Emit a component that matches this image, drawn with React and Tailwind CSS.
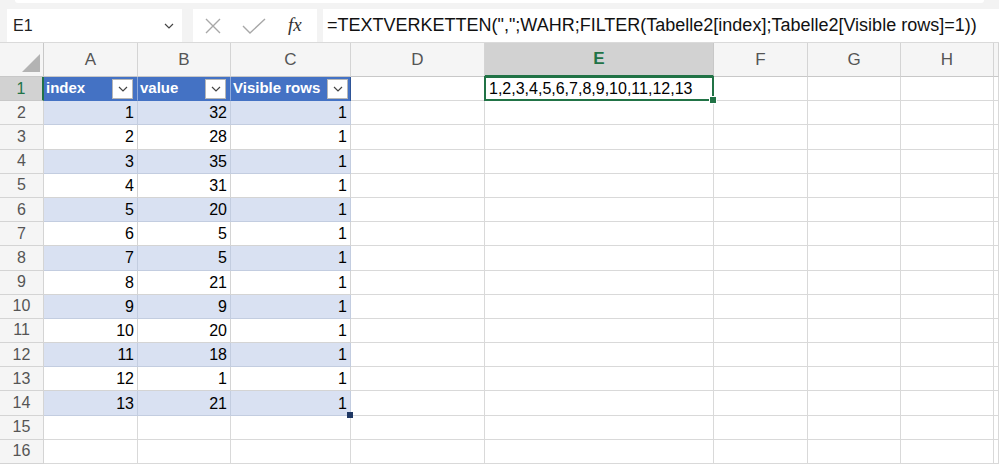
import React from 'react'

const COLS = ['A', 'B', 'C', 'D', 'E', 'F', 'G', 'H', '']
const VALUES = [32, 28, 35, 31, 20, 5, 5, 21, 9, 20, 18, 1, 21]
const FORMULA = '=TEXTVERKETTEN(",";WAHR;FILTER(Tabelle2[index];Tabelle2[Visible rows]=1))'

const font = { fontFamily: '"Liberation Sans", Arial, sans-serif' }

function Chevron({ className = '' }) {
  return (
    <svg width="10" height="6" viewBox="0 0 10 6" className={className}>
      <path d="M1 1l4 4 4-4" fill="none" stroke="#444" strokeWidth="1.2" />
    </svg>
  )
}

function FilterButton() {
  return (
    <div className="w-[21px] h-[20px] bg-white border border-[#b7b7b7] flex items-center justify-center shrink-0">
      <Chevron />
    </div>
  )
}

function FormulaBar() {
  return (
    <div className="h-[43px] bg-[#f3f3f3] border-b border-[#dadada] relative">
      <div className="h-[3px] mx-[15px] bg-white rounded-b-md" />
      <div className="flex items-stretch h-[33px] mt-[6px]">
        <div className="ml-[7px] w-[175px] bg-white flex items-center justify-between pl-[6px] pr-[8px]">
          <span className="text-[16px] text-[#222]">E1</span>
          <Chevron />
        </div>
        <div className="ml-[11px] w-[124px] bg-white flex items-center">
          <svg width="16" height="16" viewBox="0 0 16 16" className="ml-[12px]">
            <path d="M1 1l14 14M15 1L1 15" stroke="#a8a8a8" strokeWidth="1.4" fill="none" />
          </svg>
          <svg width="24" height="16" viewBox="0 0 24 16" className="ml-[21px]">
            <path d="M1 8l7 7L23 1" stroke="#a8a8a8" strokeWidth="1.4" fill="none" />
          </svg>
          <span
            className="ml-[22px] text-[19px] italic text-[#333]"
            style={{ fontFamily: '"Liberation Serif", "Times New Roman", serif' }}
          >
            fx
          </span>
        </div>
        <div className="ml-[6px] flex-1 bg-white flex items-center pl-[4px] overflow-hidden whitespace-nowrap">
          <span className="text-[18px] text-[#111]">{FORMULA}</span>
        </div>
      </div>
    </div>
  )
}

function ColumnHeaders() {
  return (
    <>
      <div className="bg-[#f5f5f5] border-r border-b border-[#c8c8c8] flex items-end justify-end pr-[3px] pb-[4px]">
        <svg width="18" height="18" viewBox="0 0 18 18">
          <path d="M18 0L18 18L0 18Z" fill="#b3b3b3" />
        </svg>
      </div>
      {COLS.map((c, i) =>
        c === 'E' ? (
          <div
            key={i}
            className="bg-[#d2d2d2] border-r border-[#c8c8c8] border-b-2 border-b-[#217346] flex items-center justify-center text-[17px] text-[#217346] font-bold"
          >
            {c}
          </div>
        ) : (
          <div
            key={i}
            className="bg-[#f5f5f5] border-r border-b border-[#d4d4d4] border-b-[#c8c8c8] flex items-center justify-center text-[17px] text-[#555]"
          >
            {c}
          </div>
        )
      )}
    </>
  )
}

function RowHeader({ n }) {
  if (n === 1) {
    return (
      <div className="bg-[#d2d2d2] border-b border-[#c8c8c8] border-r-2 border-r-[#217346] flex items-center justify-center text-[16px] text-[#217346]">
        {n}
      </div>
    )
  }
  return (
    <div className="bg-[#f5f5f5] border-b border-r border-[#d4d4d4] flex items-center justify-center text-[16px] text-[#555]">
      {n}
    </div>
  )
}

function HeaderCell({ label, last }) {
  return (
    <div
      className={
        last
          ? 'bg-[#4472c4] border-r border-b border-[#4472c4] border-r-[#2f5597] flex items-center justify-between pl-[2px] pr-[2px]'
          : 'bg-[#4472c4] border-r border-b border-[#8ea9db] border-b-[#4472c4] flex items-center justify-between pl-[2px] pr-[4px]'
      }
    >
      <span className="text-[15px] font-bold text-white">{label}</span>
      <FilterButton />
    </div>
  )
}

function NumCell({ v, band, handle }) {
  return (
    <div
      className={
        band
          ? 'relative bg-[#d9e1f2] border-r border-b border-[#c3cde0] flex items-center justify-end pr-[3px] pt-[1px] text-[16px] text-black'
          : 'relative bg-white border-r border-b border-[#d4d4d4] flex items-center justify-end pr-[3px] pt-[1px] text-[16px] text-black'
      }
    >
      {v}
      {handle && <span className="absolute -right-[3px] -bottom-[3px] w-[6px] h-[6px] bg-[#1f3864]" />}
    </div>
  )
}

function Empty() {
  return <div className="bg-white border-r border-b border-[#d9d9d9]" />
}

function SelectedCell() {
  return (
    <div className="relative bg-white border-r border-b border-[#d9d9d9] flex items-center pl-[4px] text-[16px] text-black whitespace-nowrap">
      1,2,3,4,5,6,7,8,9,10,11,12,13
      <span className="absolute -left-px -top-px -right-px -bottom-px border-2 border-[#217346]" />
      <span className="absolute -right-[4px] -bottom-[4px] w-[6px] h-[6px] bg-[#217346] border border-white box-content" />
    </div>
  )
}

export default function App() {
  const rows = []
  for (let r = 1; r <= 16; r++) {
    const cells = [<RowHeader key="h" n={r} />]
    if (r === 1) {
      cells.push(<HeaderCell key="a" label="index" />)
      cells.push(<HeaderCell key="b" label="value" />)
      cells.push(<HeaderCell key="c" label="Visible rows" last />)
      cells.push(<Empty key="d" />)
      cells.push(<SelectedCell key="e" />)
    } else if (r <= 14) {
      const band = r % 2 === 0
      cells.push(<NumCell key="a" v={r - 1} band={band} />)
      cells.push(<NumCell key="b" v={VALUES[r - 2]} band={band} />)
      cells.push(<NumCell key="c" v={1} band={band} handle={r === 14} />)
      cells.push(<Empty key="d" />)
      cells.push(<Empty key="e" />)
    } else {
      for (let k = 0; k < 5; k++) cells.push(<Empty key={'x' + k} />)
    }
    cells.push(<Empty key="f" />)
    cells.push(<Empty key="g" />)
    cells.push(<Empty key="hh" />)
    cells.push(<Empty key="i" />)
    rows.push(...cells.map((c, i) => React.cloneElement(c, { key: r + '-' + i })))
  }

  return (
    <div className="w-[999px] h-[466px] overflow-hidden bg-white" style={font}>
      <FormulaBar />
      <div className="grid grid-cols-[44px_94px_93px_120px_134px_229px_94px_93px_93px_1fr] grid-rows-[34px_repeat(16,24.2px)]">
        <ColumnHeaders />
        {rows}
      </div>
    </div>
  )
}
